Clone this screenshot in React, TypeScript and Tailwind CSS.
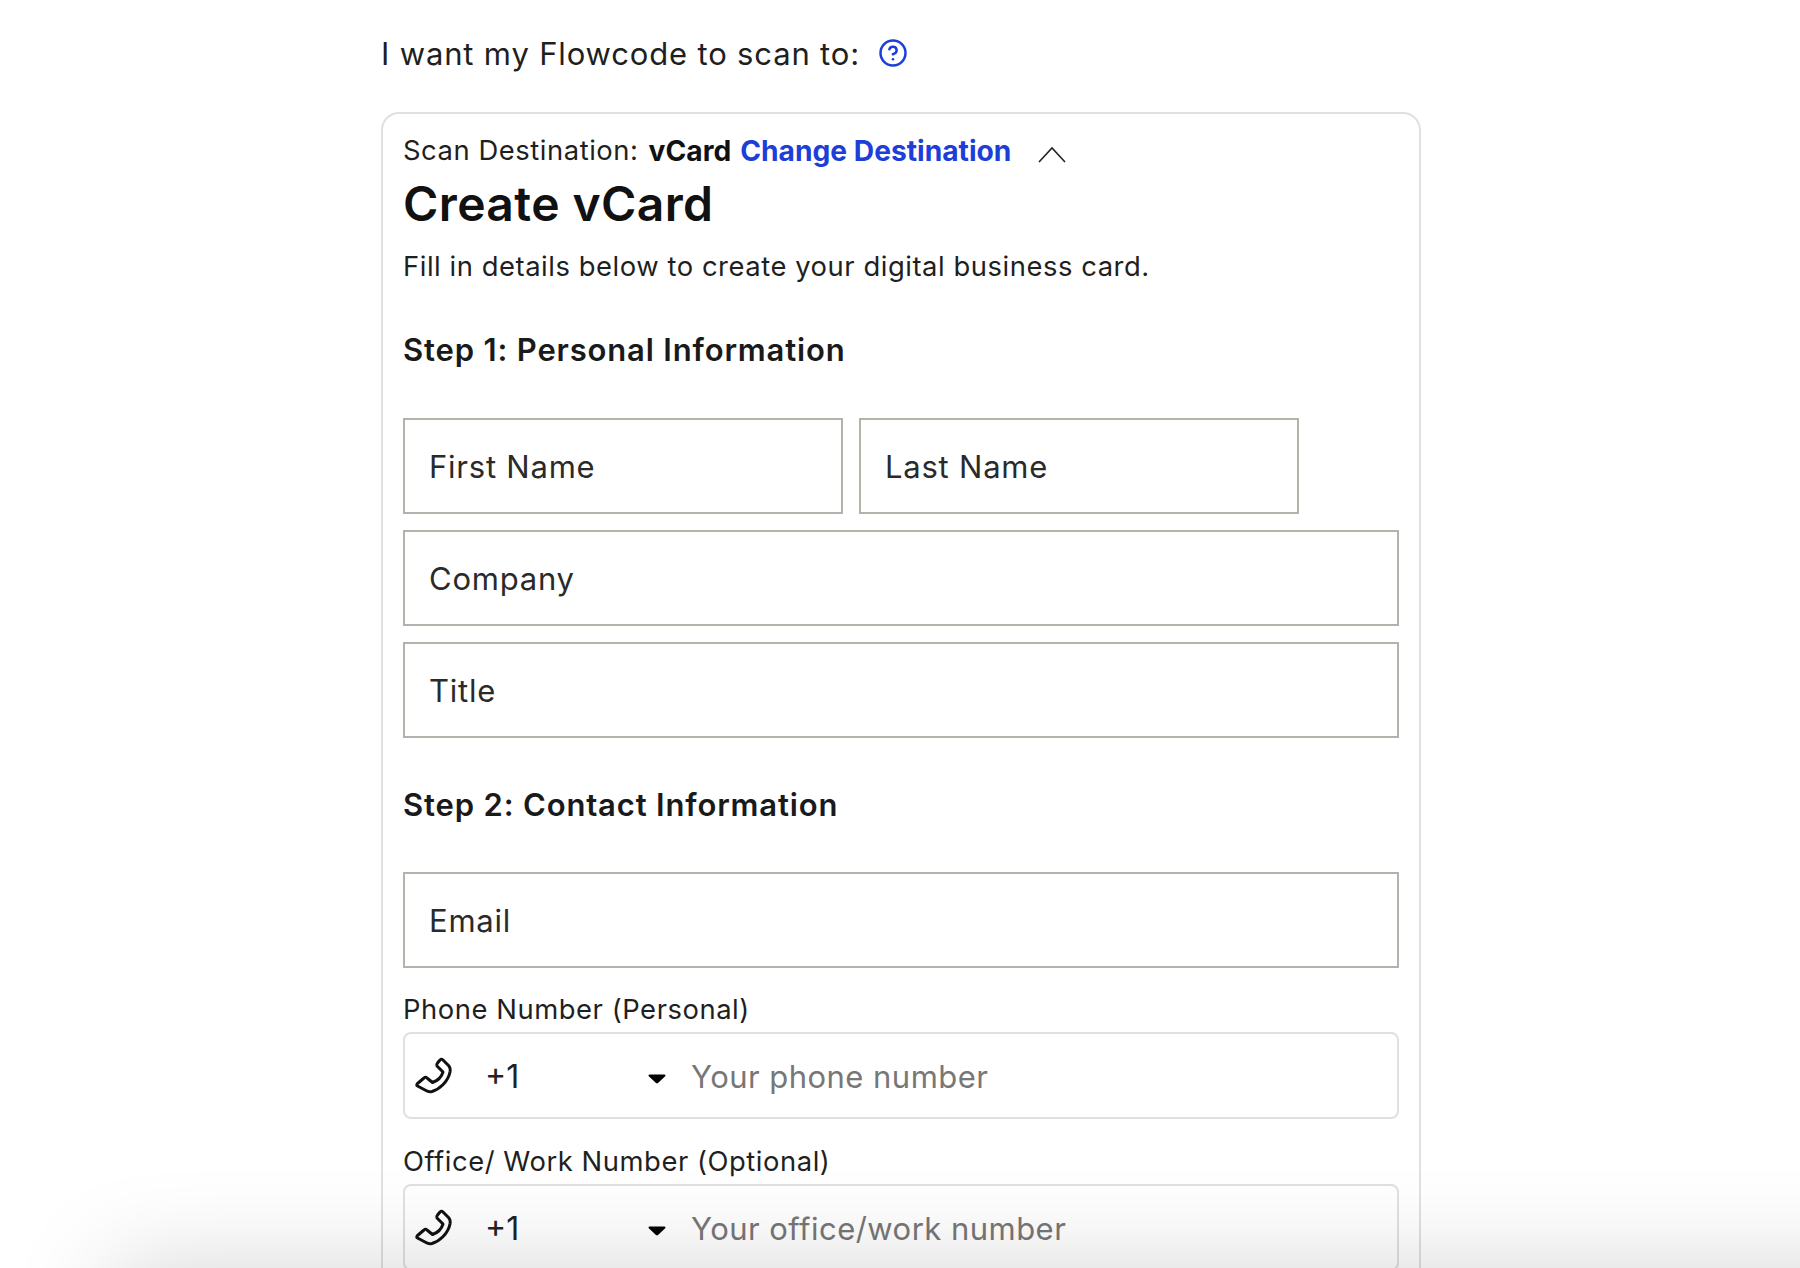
import React from 'react'
import { CircleHelp } from 'lucide-react'

const fieldClass =
  'h-[96px] border-2 border-[#b3b3ab] bg-white pl-[24px] text-[31px] tracking-[0.025em] text-[#2a2a2a] placeholder:text-[#2a2a2a] outline-none'

const PhoneRow = ({ label, placeholder }: { label: string; placeholder: string }) => (
  <div>
    <div className="h-[39px] text-[27.4px] leading-[32px] tracking-[0.02em] text-[#1f1f1f]">{label}</div>
    <div className="flex h-[87px] items-center rounded-[8px] border-2 border-[#e0e0e0]">
      <svg className="-mt-[10px] h-[50px] w-[50px] shrink-0" viewBox="0 0 50 50" fill="none">
        <path
          d="M35 14C36 13 37 13 38 14L43.5 19.5C45 21 45.5 23 45 26C43 36 34 43.5 27 45.5C24.5 46 22.5 45.5 21 44.5L12.5 40C11.5 39.5 11.5 38.5 12.5 37.5L19 32C20 31 21 31 22 32L27.5 36.5C32 35 36.5 31 38 26L32 20C31.5 19 31.5 18 32.5 17Z"
          stroke="#111111"
          strokeWidth="3"
          strokeLinejoin="round"
        />
      </svg>
      <span className="ml-[30px] mt-[3px] w-[163px] text-[32px] text-[#222222]">+1</span>
      <svg className="mt-[7px] h-[10px] w-[18px] shrink-0" viewBox="0 0 18 10">
        <path d="M1.5 0.5h15a1 1 0 0 1 .7 1.7L10 9a1.5 1.5 0 0 1-2 0L.8 2.2A1 1 0 0 1 1.5.5z" fill="#000" />
      </svg>
      <input
        className="ml-[25px] mt-[3px] min-w-0 flex-1 bg-transparent text-[31px] tracking-[0.015em] text-[#222222] placeholder:text-[#777777] outline-none"
        placeholder={placeholder}
      />
    </div>
  </div>
)

const App = () => {
  return (
    <div className="relative h-[1268px] w-[1800px] overflow-hidden bg-white font-['Inter',sans-serif]">
      <div className="ml-[381px] w-[1040px]">
        {/* top prompt */}
        <div className="flex h-[112px] items-start pt-[35px]">
          <span className="text-[31px] leading-[38px] tracking-[0.027em] text-[#1f1f1f]">I want my Flowcode to scan to:</span>
          <CircleHelp className="ml-[18px] mt-[3px] h-[30px] w-[30px] text-[#1d3fd8]" strokeWidth={2} />
        </div>

        <div className="h-[1300px] rounded-[18px] border-2 border-[#e0e0e0] px-[20px] pt-[19px]">
          <div className="flex h-[36px] items-center text-[27.4px] tracking-[0.02em] text-[#1f1f1f]">
            <span>Scan Destination:</span>
            <span className="ml-[10px] text-[28.2px] font-bold tracking-normal text-[#111111]">vCard</span>
            <span className="ml-[9px] text-[28.2px] font-bold tracking-normal text-[#1d3fd8]">Change Destination</span>
            <svg className="ml-[27px] mt-[6px] h-[17px] w-[28px]" viewBox="0 0 28 17" fill="none">
              <path d="M1 16L14 2l13 14" stroke="#222222" strokeWidth="1.6" />
            </svg>
          </div>
          <h1 className="mt-[6px] text-[48px] font-semibold leading-[58px] tracking-[0.008em] text-[#111111]">Create vCard</h1>
          <p className="mt-[16px] text-[27.4px] leading-[34px] tracking-[0.02em] text-[#1f1f1f]">Fill in details below to create your digital business card.</p>

          <h2 className="mt-[47px] text-[31px] font-semibold leading-[40px] tracking-[0.027em] text-[#1a1a1a]">Step 1: Personal Information</h2>
          <div className="mt-[48px] flex flex-col gap-[16px]">
            <div className="flex gap-[16px]">
              <input className={`w-[440px] ${fieldClass}`} placeholder="First Name" />
              <input className={`w-[440px] ${fieldClass}`} placeholder="Last Name" />
            </div>
            <input className={`w-full ${fieldClass}`} placeholder="Company" />
            <input className={`w-full ${fieldClass}`} placeholder="Title" />
          </div>

          <h2 className="mt-[47px] text-[31px] font-semibold leading-[40px] tracking-[0.027em] text-[#1a1a1a]">Step 2: Contact Information</h2>
          <input className={`mt-[47px] w-full ${fieldClass}`} placeholder="Email" />

          <div className="mt-[25px] flex flex-col gap-[26px]">
            <PhoneRow label="Phone Number (Personal)" placeholder="Your phone number" />
            <PhoneRow label="Office/ Work Number (Optional)" placeholder="Your office/work number" />
          </div>
        </div>
      </div>

      {/* bar below the fold, only its shadow shows */}
      <div className="pointer-events-none absolute left-[110px] right-[-200px] top-[1268px] h-[200px] bg-white shadow-[0_0_100px_rgba(0,0,0,0.17)]" />
    </div>
  )
}

export default App
